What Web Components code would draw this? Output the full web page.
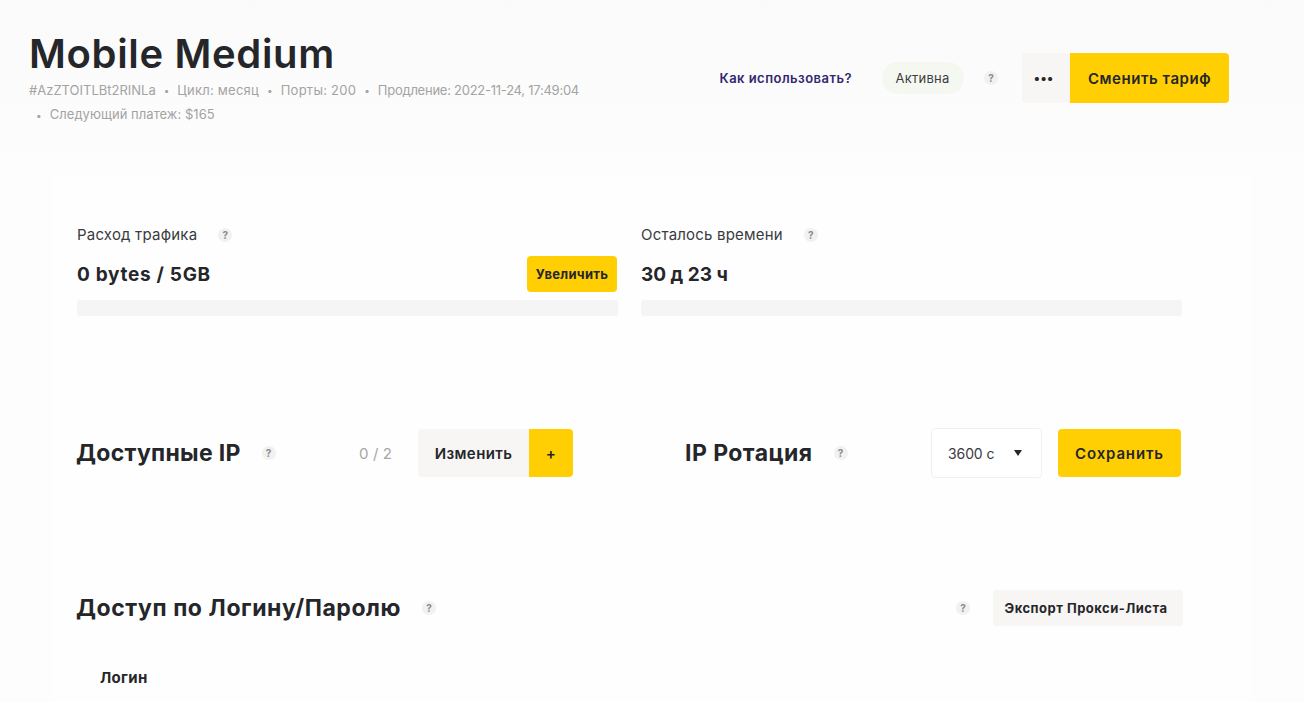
<!DOCTYPE html>
<html lang="ru">
<head>
<meta charset="utf-8">
<title>Mobile Medium</title>
<style>
  html, body { margin: 0; height: 702px; overflow: hidden; background: #fcfcfc; }
  body { font-family: "Inter", "Liberation Sans", sans-serif; color: #25262a; background: linear-gradient(#fafafa, #fdfdfd 170px, #fdfdfd); }
</style>
</head>
<body>
<proxy-page>
  <plan-header slot="header" title="Mobile Medium"></plan-header>
  <plan-stats></plan-stats>
  <ip-settings></ip-settings>
  <access-head></access-head>
</proxy-page>

<script>
// small "?" hint
class HelpMark extends HTMLElement {
  constructor() {
    super();
    this.attachShadow({ mode: 'open' });
    this.shadowRoot.innerHTML = `
    <style>
      :host {
        display: inline-flex;
        align-items: center;
        justify-content: center;
        width: 14px;
        height: 14px;
        border-radius: 50%;
        background: #f1f1f1;
        color: #8b8b8b;
        font-size: 10px;
        font-weight: 700;
        line-height: 1;
        letter-spacing: 0;
      }
    </style>?`;
  }
}
customElements.define('help-mark', HelpMark);

// flat button: yellow by default, kind="grey" for the light one
class FlatButton extends HTMLElement {
  constructor() {
    super();
    this.attachShadow({ mode: 'open' });
    this.shadowRoot.innerHTML = `
    <style>
      :host {
        display: inline-flex;
        align-items: center;
        justify-content: center;
        box-sizing: border-box;
        background: #ffcf03;
        color: #25262a;
        font-size: 15px;
        font-weight: 600;
        letter-spacing: .55px;
        border-radius: 4px;
        white-space: nowrap;
      }
      :host([kind="grey"]) { background: #f7f6f5; }
      :host([join="left"]) { border-radius: 0 4px 4px 0; }
      :host([join="right"]) { border-radius: 4px 0 0 4px; }
    </style>
    <slot></slot>`;
  }
}
customElements.define('flat-button', FlatButton);

class PlanHeader extends HTMLElement {
  constructor() {
    super();
    this.attachShadow({ mode: 'open' });
    this.shadowRoot.innerHTML = `
    <style>
      :host {
        display: flex;
        justify-content: space-between;
        align-items: flex-start;
        height: 175px;
        box-sizing: border-box;
        padding: 29px 75px 0 29px;
      }
      h1 {
        margin: 0;
        font-size: 40px;
        line-height: 50px;
        font-weight: 600;
        letter-spacing: .65px;
      }
      .meta {
        display: flex;
        flex-wrap: wrap;
        width: 600px;
        font-size: 13px;
        line-height: 24px;
        color: #a3a3a3;
        margin-top: -1px;
      }
      .meta span { white-space: nowrap; }
      .dot { padding: 0 8px; font-size: 10px; }
      .wide { letter-spacing: .25px; }
      .narrow { letter-spacing: -.25px; }
      .second { flex-basis: 100%; margin-left: -1px; letter-spacing: .05px; }
      .actions {
        display: flex;
        align-items: center;
        height: 50px;
        margin-top: 24px;
      }
      .how {
        color: #33266e;
        font-size: 13px;
        font-weight: 600;
        letter-spacing: .47px;
        margin-right: 30px;
      }
      .status {
        display: flex;
        align-items: center;
        justify-content: center;
        width: 82px;
        height: 32px;
        border-radius: 16px;
        background: #f5f8f1;
        font-size: 13px;
        letter-spacing: .25px;
        color: #3c3d40;
        padding-right: 1px;
        box-sizing: border-box;
      }
      help-mark { margin: 0 24px 0 20px; }
      .more { width: 48px; height: 50px; padding-right: 4px; letter-spacing: 1px; font-weight: 800; font-size: 13px; }
      .change { width: 159px; height: 50px; }
    </style>
    <div>
      <h1>${this.getAttribute('title')}</h1>
      <div class="meta">
        <span>#AzZTOITLBt2RINLa</span><span class="dot">•</span>
        <span class="wide">Цикл: месяц</span><span class="dot">•</span>
        <span class="wide">Порты: 200</span><span class="dot">•</span>
        <span class="narrow">Продление: 2022-11-24, 17:49:04</span>
        <div class="second"><span class="dot">•</span><span>Следующий платеж: $165</span></div>
      </div>
    </div>
    <div class="actions">
      <span class="how">Как использовать?</span>
      <span class="status">Активна</span>
      <help-mark></help-mark>
      <flat-button kind="grey" join="right" class="more">•••</flat-button>
      <flat-button join="left" class="change">Сменить тариф</flat-button>
    </div>`;
  }
}
customElements.define('plan-header', PlanHeader);

class UsageMeter extends HTMLElement {
  constructor() {
    super();
    this.attachShadow({ mode: 'open' });
    this.shadowRoot.innerHTML = `
    <style>
      :host { display: block; }
      .label { display: flex; align-items: center; gap: 21px; font-size: 15px; letter-spacing: .2px; line-height: 20px; color: #3a3b3f; }
      .value {
        display: flex;
        justify-content: space-between;
        align-items: center;
        height: 36px;
        margin-top: 11px;
        font-size: 19px;
        font-weight: 700;
        letter-spacing: var(--value-spacing, 0);
      }
      .bar { height: 16px; margin-top: 8px; border-radius: 3px; background: #f5f5f5; }
      ::slotted(flat-button) { width: 90px; height: 36px; margin-right: 1px; font-size: 13px; font-weight: 700; letter-spacing: .3px; }
    </style>
    <div class="label">${this.getAttribute('label')}<help-mark></help-mark></div>
    <div class="value"><span>${this.getAttribute('value')}</span><slot></slot></div>
    <div class="bar"></div>`;
  }
}
customElements.define('usage-meter', UsageMeter);

class PlanStats extends HTMLElement {
  constructor() {
    super();
    this.attachShadow({ mode: 'open' });
    this.shadowRoot.innerHTML = `
    <style>
      :host {
        display: grid;
        grid-template-columns: 541px 541px;
        column-gap: 23px;
        padding: 50px 0 0 77px;
        height: 254px;
        box-sizing: border-box;
      }
    </style>
    <usage-meter label="Расход трафика" value="0 bytes / 5GB" style="--value-spacing:.7px"><flat-button>Увеличить</flat-button></usage-meter>
    <usage-meter label="Осталось времени" value="30 д 23 ч"></usage-meter>`;
  }
}
customElements.define('plan-stats', PlanStats);

class IpSettings extends HTMLElement {
  constructor() {
    super();
    this.attachShadow({ mode: 'open' });
    this.shadowRoot.innerHTML = `
    <style>
      :host {
        display: grid;
        grid-template-columns: 496px 496px;
        column-gap: 112px;
        height: 161px;
        padding-left: 77px;
        box-sizing: border-box;
      }
      .side { display: flex; align-items: center; height: 48px; }
      h2 { margin: 0; font-size: 23px; font-weight: 700; letter-spacing: .45px; white-space: nowrap; }
      .ip { margin-left: -1px; letter-spacing: .3px; }
      help-mark { margin-left: 21px; }
      .count { margin-left: auto; margin-right: 26px; color: #a6a6a6; font-size: 15px; letter-spacing: .1px; }
      .edit { width: 111px; height: 48px; letter-spacing: .4px; }
      .plus { width: 44px; height: 48px; }
      .select {
        display: flex;
        align-items: center;
        justify-content: space-between;
        box-sizing: border-box;
        width: 111px;
        height: 50px;
        margin-left: auto;
        padding: 0 19px 0 16px;
        border: 1px solid #f0f0f3;
        border-radius: 4px;
        background: #fff;
        font-size: 14px;
        letter-spacing: -.1px;
        color: #3a3b3f;
      }
      .arrow { width: 0; height: 0; border-left: 4.5px solid transparent; border-right: 4.5px solid transparent; border-top: 6px solid #25262a; }
      .save { width: 123px; height: 48px; margin-left: 16px; letter-spacing: .85px; }
    </style>
    <div class="side">
      <h2 class="ip">Доступные IP</h2><help-mark></help-mark>
      <span class="count">0 / 2</span>
      <flat-button kind="grey" join="right" class="edit">Изменить</flat-button>
      <flat-button join="left" class="plus">+</flat-button>
    </div>
    <div class="side">
      <h2>IP Ротация</h2><help-mark></help-mark>
      <div class="select"><span>3600 с</span><i class="arrow"></i></div>
      <flat-button class="save">Сохранить</flat-button>
    </div>`;
  }
}
customElements.define('ip-settings', IpSettings);

class AccessHead extends HTMLElement {
  constructor() {
    super();
    this.attachShadow({ mode: 'open' });
    this.shadowRoot.innerHTML = `
    <style>
      :host { display: block; padding-left: 77px; }
      .row { display: flex; align-items: center; width: 1106px; height: 36px; }
      h2 { margin: 0 0 0 -1px; font-size: 23px; font-weight: 700; letter-spacing: .58px; white-space: nowrap; }
      .row > help-mark { margin-left: 21px; }
      .right { margin-left: auto; display: flex; align-items: center; gap: 23px; }
      .export { width: 190px; height: 36px; padding-right: 4px; font-size: 13px; font-weight: 700; letter-spacing: .5px; }
      .login { margin: 43px 0 0 23px; font-size: 15px; font-weight: 700; letter-spacing: .3px; line-height: 18px; }
    </style>
    <div class="row">
      <h2>Доступ по Логину/Паролю</h2><help-mark></help-mark>
      <div class="right"><help-mark></help-mark><flat-button kind="grey" class="export">Экспорт Прокси-Листа</flat-button></div>
    </div>
    <div class="login">Логин</div>`;
  }
}
customElements.define('access-head', AccessHead);

class ProxyPage extends HTMLElement {
  constructor() {
    super();
    this.attachShadow({ mode: 'open' });
    this.shadowRoot.innerHTML = `
    <style>
      :host { display: block; height: 702px; overflow: hidden; }
      .card { margin: 0 54px; min-height: 527px; background: #fefefe; }
      .inner { margin: 0 -54px; }
    </style>
    <slot name="header"></slot>
    <div class="card"><div class="inner"><slot></slot></div></div>`;
  }
}
customElements.define('proxy-page', ProxyPage);
</script>
</body>
</html>
